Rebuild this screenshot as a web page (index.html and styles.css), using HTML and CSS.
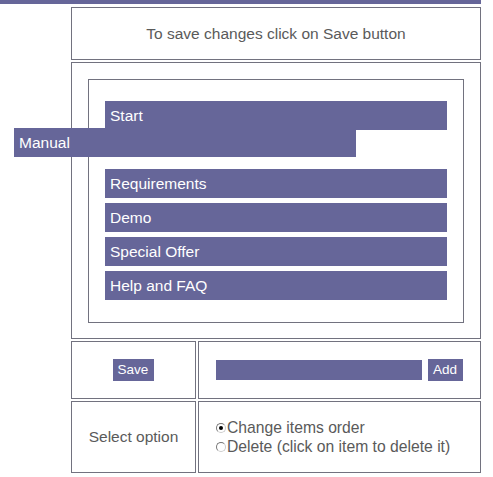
FILE: index.html
```html
<!DOCTYPE html>
<html>
<head>
<meta charset="utf-8">
<title>Menu editor</title>
<link rel="stylesheet" href="styles.css">
</head>
<body>
<div class="topbar"></div>
<div class="panel">
  <div class="cell msg">To save changes click on Save button</div>
  <div class="cell listcell">
    <div class="listbox">
      <ul class="items">
        <li class="item">Start</li>
        <li class="item placeholder"></li>
        <li class="item">Requirements</li>
        <li class="item">Demo</li>
        <li class="item">Special Offer</li>
        <li class="item">Help and FAQ</li>
      </ul>
    </div>
  </div>
  <div class="cell savecell"><button class="btn">Save</button></div>
  <div class="cell addcell"><input class="field" type="text"><button class="btn">Add</button></div>
  <div class="cell label">Select option</div>
  <div class="cell options">
    <div class="opt"><span class="radio checked"></span>Change items order</div>
    <div class="opt"><span class="radio"></span>Delete (click on item to delete it)</div>
  </div>
</div>
<div class="item dragging">Manual</div>
</body>
</html>
```
FILE: styles.css
```css
html, body {
  margin: 0;
  padding: 0;
  background: #fff;
}
body {
  font-family: "Liberation Sans", Arial, sans-serif;
  font-size: 15.5px;
  color: #5a5a5a;
  position: relative;
}
.topbar {
  width: 481px;
  height: 4px;
  background: #666699;
}
.panel {
  display: grid;
  grid-template-columns: 125px 283px;
  grid-template-rows: 53px 277px 58px 72px;
  gap: 2px;
  width: 410px;
  margin: 3px 0 0 71px;
}
.cell {
  border: 1px solid #72727f;
  box-sizing: border-box;
}
.msg {
  grid-column: 1 / span 2;
  display: flex;
  align-items: center;
  justify-content: center;
}
.listcell {
  grid-column: 1 / span 2;
  padding: 16px 16px 15px 16px;
}
.listbox {
  border: 1px solid #72727f;
  padding: 21px 16px 22px 16px;
}
.items {
  list-style: none;
  margin: 0;
  padding: 0;
  display: flex;
  flex-direction: column;
  gap: 5px;
}
.item {
  box-sizing: border-box;
  width: 342px;
  height: 29px;
  padding: 6px 0 0 5px;
  line-height: 17px;
  background: #666699;
  color: #fff;
  white-space: nowrap;
}
.placeholder {
  visibility: hidden;
}
.dragging {
  position: absolute;
  left: 14px;
  top: 128px;
  z-index: 2;
}
.savecell {
  display: flex;
  align-items: center;
  justify-content: center;
}
.addcell {
  display: flex;
  align-items: center;
  justify-content: center;
  gap: 6px;
}
.btn {
  font-family: "Liberation Sans", Arial, sans-serif;
  font-size: 13.5px;
  height: 22px;
  padding: 0 6px 0 5px;
  border: none;
  margin: 0;
  background: #666699;
  color: #fff;
  line-height: 22px;
}
.field {
  display: block;
  width: 206px;
  height: 20px;
  box-sizing: border-box;
  border: none;
  padding: 0;
  margin: 0;
  background: #666699;
}
.label {
  display: flex;
  align-items: center;
  justify-content: center;
}
.options {
  display: flex;
  flex-direction: column;
  justify-content: center;
  padding-left: 17px;
  font-size: 15.7px;
}
.opt {
  display: flex;
  align-items: center;
  line-height: 19px;
  white-space: nowrap;
}
.radio {
  position: relative;
  width: 10px;
  height: 10px;
  box-sizing: border-box;
  border: 1px solid;
  border-color: #777 #ccc #ccc #777;
  border-radius: 50%;
  margin-right: 1px;
  background: #fff;
  flex: none;
}
.radio.checked::after {
  content: "";
  position: absolute;
  left: 2px;
  top: 2px;
  width: 4px;
  height: 4px;
  border-radius: 50%;
  background: #000;
}
```
